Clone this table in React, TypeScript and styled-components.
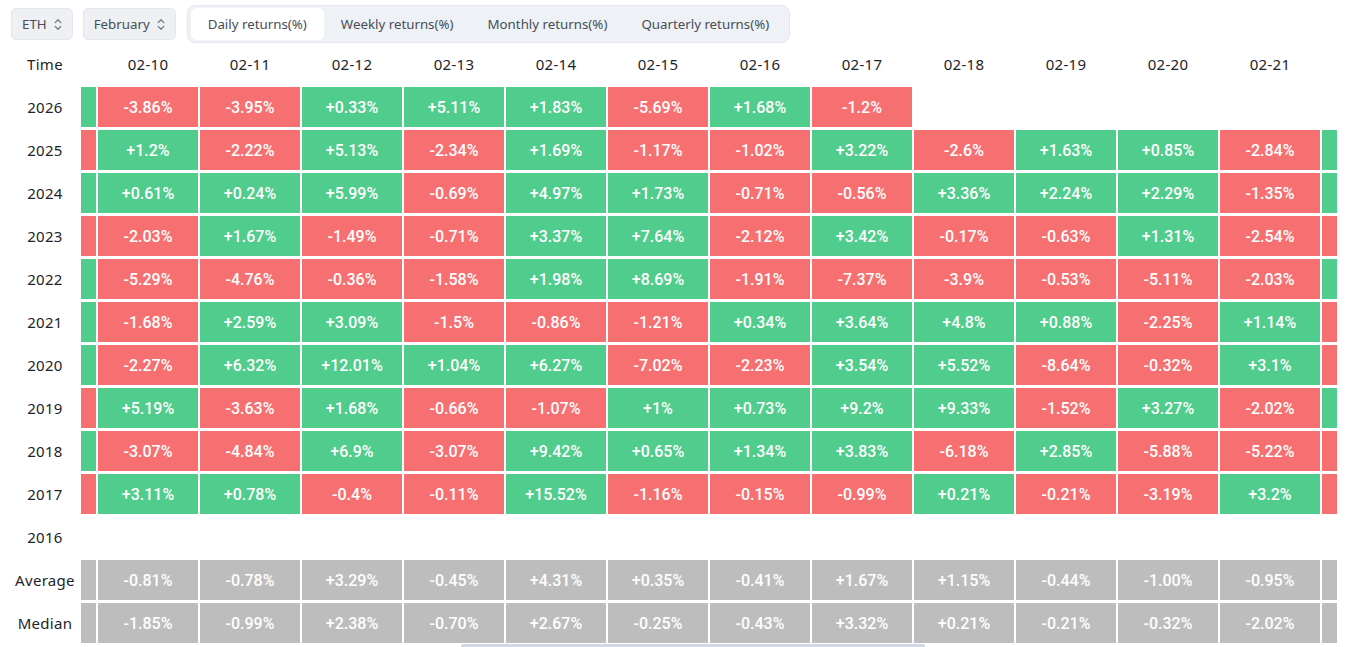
import React, { useState } from 'react';
import styled, { createGlobalStyle } from 'styled-components';

const GlobalStyle = createGlobalStyle`
  html, body {
    margin: 0;
    padding: 0;
    background: #ffffff;
    overflow: hidden;
  }
  * {
    box-sizing: border-box;
  }
`;

const Page = styled.div`
  padding: 5px 0 0 11px;
  font-family: 'Noto Sans', 'Open Sans', sans-serif;
  color: #1e2329;
`;

const Toolbar = styled.div`
  display: flex;
  align-items: center;
  gap: 10px;
  height: 38px;
`;

const SelectButton = styled.button`
  display: flex;
  align-items: center;
  gap: 7px;
  height: 32px;
  padding: 0 10px 0 10px;
  background: #eef0f4;
  border: 1px solid #e3e6eb;
  border-radius: 5px;
  font-family: inherit;
  font-size: 13.3px;
  color: #474d57;
  cursor: pointer;
`;

const Segmented = styled.div`
  display: flex;
  align-items: center;
  height: 38px;
  padding: 3px;
  margin-left: 1px;
  background: #eef1f5;
  border: 1px solid #e4e7ec;
  border-radius: 8px;
`;

const Tab = styled.button<{ $active?: boolean }>`
  height: 32px;
  padding: 0 17px;
  border: none;
  border-radius: 6px;
  background: ${p => (p.$active ? '#ffffff' : 'transparent')};
  font-family: inherit;
  font-size: 13.3px;
  color: #474d57;
  cursor: pointer;
  white-space: nowrap;
`;

const Grid = styled.div`
  display: grid;
  grid-template-columns: 68px 15px repeat(12, 100px) 15px;
  grid-template-rows: 41px;
  grid-auto-rows: 40px;
  column-gap: 2px;
  row-gap: 3px;
`;

const HeadCell = styled.div`
  display: flex;
  align-items: center;
  justify-content: center;
  font-size: 15px;
  color: #1e2329;
  letter-spacing: 0.3px;
`;

const Label = styled(HeadCell)``;

type Tone = 'up' | 'down' | 'flat' | 'none';

const toneColor: Record<Tone, string> = {
  up: '#50cc8c',
  down: '#f67072',
  flat: '#bdbdbd',
  none: 'transparent',
};

const Cell = styled.div<{ $tone: Tone }>`
  display: flex;
  align-items: center;
  justify-content: center;
  overflow: hidden;
  background: ${p => toneColor[p.$tone]};
  color: #ffffff;
  font-family: Roboto, 'Liberation Sans', sans-serif;
  font-size: 16px;
  font-weight: 500;
`;

const Track = styled.div`
  height: 4px;
  margin-top: 1px;
`;

const Thumb = styled.div`
  width: 464px;
  height: 4px;
  margin-left: 450px;
  border-radius: 2px;
  background: #d3d7e4;
`;

const UpDown = () => (
  <svg width="8" height="13" viewBox="0 0 8 13" fill="none" stroke="#707a8a" strokeWidth="1.3" strokeLinecap="round" strokeLinejoin="round">
    <path d="M1.2 4.6 L4 1.8 L6.8 4.6" />
    <path d="M1.2 8.4 L4 11.2 L6.8 8.4" />
  </svg>
);

const dates = ['02-10', '02-11', '02-12', '02-13', '02-14', '02-15', '02-16', '02-17', '02-18', '02-19', '02-20', '02-21'];

type Row = { label: string; left: Tone; right: Tone; values: (string | null)[]; stat?: boolean };

const rows: Row[] = [
  { label: '2026', left: 'up', right: 'none', values: ['-3.86%', '-3.95%', '+0.33%', '+5.11%', '+1.83%', '-5.69%', '+1.68%', '-1.2%', null, null, null, null] },
  { label: '2025', left: 'down', right: 'up', values: ['+1.2%', '-2.22%', '+5.13%', '-2.34%', '+1.69%', '-1.17%', '-1.02%', '+3.22%', '-2.6%', '+1.63%', '+0.85%', '-2.84%'] },
  { label: '2024', left: 'up', right: 'up', values: ['+0.61%', '+0.24%', '+5.99%', '-0.69%', '+4.97%', '+1.73%', '-0.71%', '-0.56%', '+3.36%', '+2.24%', '+2.29%', '-1.35%'] },
  { label: '2023', left: 'down', right: 'down', values: ['-2.03%', '+1.67%', '-1.49%', '-0.71%', '+3.37%', '+7.64%', '-2.12%', '+3.42%', '-0.17%', '-0.63%', '+1.31%', '-2.54%'] },
  { label: '2022', left: 'up', right: 'up', values: ['-5.29%', '-4.76%', '-0.36%', '-1.58%', '+1.98%', '+8.69%', '-1.91%', '-7.37%', '-3.9%', '-0.53%', '-5.11%', '-2.03%'] },
  { label: '2021', left: 'up', right: 'down', values: ['-1.68%', '+2.59%', '+3.09%', '-1.5%', '-0.86%', '-1.21%', '+0.34%', '+3.64%', '+4.8%', '+0.88%', '-2.25%', '+1.14%'] },
  { label: '2020', left: 'up', right: 'down', values: ['-2.27%', '+6.32%', '+12.01%', '+1.04%', '+6.27%', '-7.02%', '-2.23%', '+3.54%', '+5.52%', '-8.64%', '-0.32%', '+3.1%'] },
  { label: '2019', left: 'down', right: 'up', values: ['+5.19%', '-3.63%', '+1.68%', '-0.66%', '-1.07%', '+1%', '+0.73%', '+9.2%', '+9.33%', '-1.52%', '+3.27%', '-2.02%'] },
  { label: '2018', left: 'up', right: 'down', values: ['-3.07%', '-4.84%', '+6.9%', '-3.07%', '+9.42%', '+0.65%', '+1.34%', '+3.83%', '-6.18%', '+2.85%', '-5.88%', '-5.22%'] },
  { label: '2017', left: 'down', right: 'down', values: ['+3.11%', '+0.78%', '-0.4%', '-0.11%', '+15.52%', '-1.16%', '-0.15%', '-0.99%', '+0.21%', '-0.21%', '-3.19%', '+3.2%'] },
  { label: '2016', left: 'none', right: 'none', values: Array(12).fill(null) },
  { label: 'Average', left: 'flat', right: 'flat', stat: true, values: ['-0.81%', '-0.78%', '+3.29%', '-0.45%', '+4.31%', '+0.35%', '-0.41%', '+1.67%', '+1.15%', '-0.44%', '-1.00%', '-0.95%'] },
  { label: 'Median', left: 'flat', right: 'flat', stat: true, values: ['-1.85%', '-0.99%', '+2.38%', '-0.70%', '+2.67%', '-0.25%', '-0.43%', '+3.32%', '+0.21%', '-0.21%', '-0.32%', '-2.02%'] },
];

const toneOf = (v: string | null, stat?: boolean): Tone => {
  if (v === null) return 'none';
  if (stat) return 'flat';
  return v.startsWith('-') ? 'down' : 'up';
};

const tabs = ['Daily returns(%)', 'Weekly returns(%)', 'Monthly returns(%)', 'Quarterly returns(%)'];

const App: React.FC = () => {
  const [tab, setTab] = useState(0);

  return (
    <Page>
      <GlobalStyle />
      <Toolbar>
        <SelectButton>
          ETH <UpDown />
        </SelectButton>
        <SelectButton>
          February <UpDown />
        </SelectButton>
        <Segmented>
          {tabs.map((t, i) => (
            <Tab key={t} $active={i === tab} onClick={() => setTab(i)}>
              {t}
            </Tab>
          ))}
        </Segmented>
      </Toolbar>

      <Grid>
        <HeadCell>Time</HeadCell>
        <HeadCell />
        {dates.map(d => (
          <HeadCell key={d}>{d}</HeadCell>
        ))}
        <HeadCell />

        {rows.map(r => (
          <React.Fragment key={r.label}>
            <Label>{r.label}</Label>
            <Cell $tone={r.left} />
            {r.values.map((v, i) => (
              <Cell key={i} $tone={toneOf(v, r.stat)}>
                {v}
              </Cell>
            ))}
            <Cell $tone={r.right} />
          </React.Fragment>
        ))}
      </Grid>

      <Track>
        <Thumb />
      </Track>
    </Page>
  );
};

export default App;
